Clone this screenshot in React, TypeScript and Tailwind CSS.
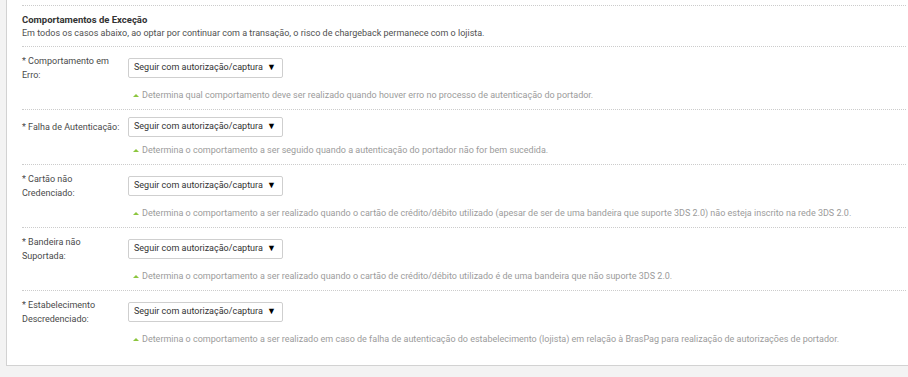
const rows = [
  {
    label: ["* Comportamento em", "Erro:"],
    hint: "Determina qual comportamento deve ser realizado quando houver erro no processo de autenticação do portador.",
  },
  {
    label: ["* Falha de Autenticação:"],
    hint: "Determina o comportamento a ser seguido quando a autenticação do portador não for bem sucedida.",
  },
  {
    label: ["* Cartão não", "Credenciado:"],
    hint: "Determina o comportamento a ser realizado quando o cartão de crédito/débito utilizado (apesar de ser de uma bandeira que suporte 3DS 2.0) não esteja inscrito na rede 3DS 2.0.",
  },
  {
    label: ["* Bandeira não", "Suportada:"],
    hint: "Determina o comportamento a ser realizado quando o cartão de crédito/débito utilizado é de uma bandeira que não suporte 3DS 2.0.",
  },
  {
    label: ["* Estabelecimento", "Descredenciado:"],
    hint: "Determina o comportamento a ser realizado em caso de falha de autenticação do estabelecimento (lojista) em relação à BrasPag para realização de autorizações de portador.",
  },
];

function FakeSelect() {
  return (
    <div className="flex h-[20px] w-[155px] items-center justify-between rounded-[2px] border border-[#cfcfcf] bg-white pl-[5px] pr-[6px] whitespace-nowrap text-[#333]">
      <span>Seguir com autorização/captura</span>
      <span className="text-[9px] text-black">▼</span>
    </div>
  );
}

export default function App() {
  return (
    <div
      className="h-[377px] overflow-hidden bg-[#f3f3f3] text-[9px]"
      style={{ fontFamily: "Roboto, Arial, sans-serif" }}
    >
      <div className="ml-[6px] border-b border-l border-[#d2d2d2] bg-white pt-[5px] pl-[15px] pr-[2px]">
        <div className="border-y border-dotted border-[#cccccc] pt-[7px] pb-[6px] whitespace-nowrap">
          <div className="text-[9.5px] font-bold leading-[14px] text-[#333]">Comportamentos de Exceção</div>
          <div className="leading-[13px] text-[#505050]">
            Em todos os casos abaixo, ao optar por continuar com a transação, o risco de chargeback permanece com o lojista.
          </div>
        </div>

        {rows.map((r, i) => (
          <div
            key={i}
            className={
              i === rows.length - 1
                ? "pt-[7px] pb-[19px]"
                : "border-b border-dotted border-[#cccccc] pt-[7px] pb-[7px]"
            }
          >
            <div className="flex items-center">
              <div className="w-[106px] shrink-0 whitespace-nowrap leading-[14px] text-[#4a4a4a]">
                {r.label.map((l, j) => (
                  <div key={j}>{l}</div>
                ))}
              </div>
              <FakeSelect />
            </div>
            <div className="mt-[7px] ml-[106px] flex items-center whitespace-nowrap pl-[5px] leading-[13px] text-[#9b9b9b]">
              <span className="mr-[3px] h-0 w-0 border-x-[3px] border-b-[3px] border-x-transparent border-b-[#8cc63e]" />
              <span>{r.hint}</span>
            </div>
          </div>
        ))}
      </div>
    </div>
  );
}
